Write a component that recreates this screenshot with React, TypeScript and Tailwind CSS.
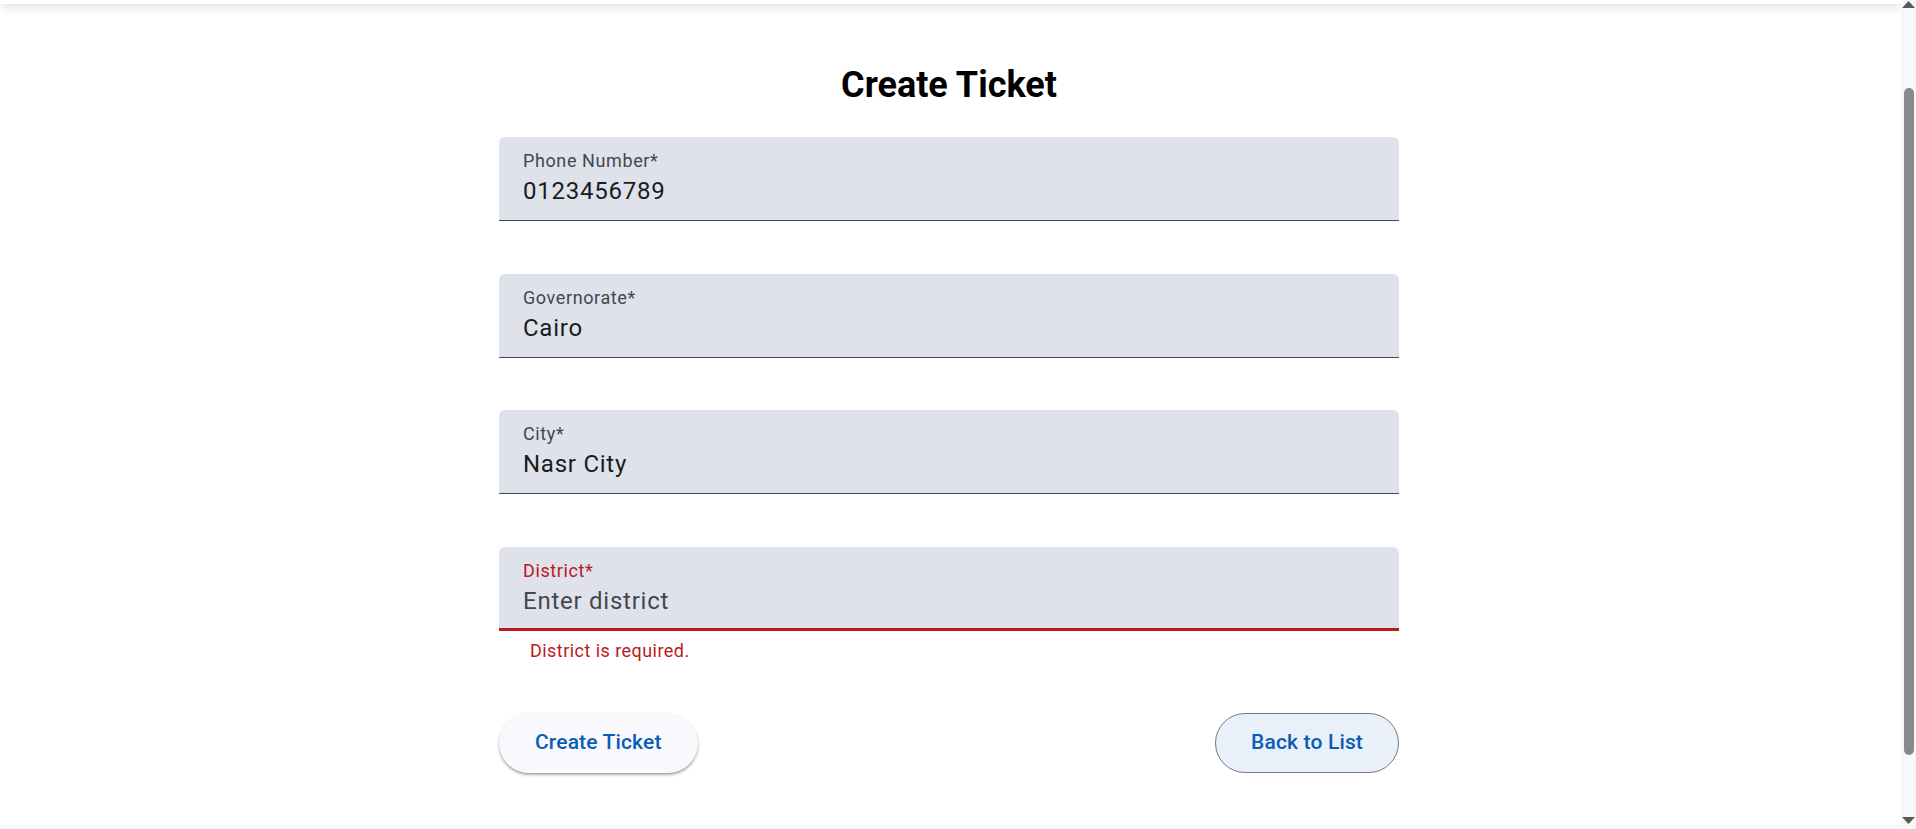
import { useLayoutEffect, useRef } from 'react';

// ── Field ─────────────────────────────────────────────────────────────────

type FieldProps = {
  label: string;
  value?: string;
  placeholder?: string;
  error?: string;
};

function FilledField({ label, value, placeholder, error }: FieldProps) {
  const invalid = Boolean(error);
  return (
    <div className="flex flex-col">
      <label
        className={`
          flex flex-col h-[84px] px-[24px] pt-[12px] rounded-t-[6px] bg-[#dfe2eb]
          ${invalid ? 'border-b-[3px] border-[#ba1a1a]' : 'border-b border-[#44474e]'}
        `}
      >
        <span
          className={`
            text-[18px] leading-[24px] tracking-[0.6px]
            ${invalid ? 'text-[#ba1a1a]' : 'text-[#44474e]'}
          `}
        >
          {label}*
        </span>
        <input
          type="text"
          defaultValue={value}
          placeholder={placeholder}
          className="
            w-full h-[36px] bg-transparent outline-none border-none p-0
            text-[24px] leading-[36px] tracking-[0.75px] text-[#1a1c1e]
            placeholder:text-[#44474e]
          "
        />
      </label>
      {invalid && (
        <p className="pl-[31px] pt-[8px] text-[18px] leading-[24px] tracking-[0.45px] text-[#ba1a1a]">
          {error}
        </p>
      )}
    </div>
  );
}

// ── Scrollbar (classic, drawn beside the scroll area) ─────────────────────

function ScrollRail() {
  return (
    <aside className="w-[15px] shrink-0 bg-[#f8f8f8] flex flex-col items-center">
      <svg className="mt-[1px] shrink-0" width="13" height="7" viewBox="0 0 13 7">
        <path d="M6.5 0L13 7H0Z" fill="#5a5a5a" />
      </svg>
      <div className="mt-[80px] w-[10px] h-[667px] shrink-0 rounded-full bg-[#8a8a8a]" />
      <div className="flex-1" />
      <svg className="mb-[5px] shrink-0" width="13" height="7" viewBox="0 0 13 7">
        <path d="M0 0H13L6.5 7Z" fill="#5a5a5a" />
      </svg>
    </aside>
  );
}

// ── Page ──────────────────────────────────────────────────────────────────

export default function App() {
  const scrollRef = useRef<HTMLDivElement>(null);

  // The reference is captured slightly scrolled past the app bar
  useLayoutEffect(() => {
    if (scrollRef.current) scrollRef.current.scrollTop = 91;
  }, []);

  return (
    <div className="flex h-screen overflow-hidden bg-white font-['Roboto','Liberation_Sans',sans-serif]">
      <div ref={scrollRef} className="flex-1 min-w-0 overflow-y-auto [scrollbar-width:none]">
        <header className="relative z-10 h-[95px] bg-white shadow-[0_3px_10px_rgba(0,0,0,0.13)]" />

        <main className="flex justify-center pr-[3px]">
          <div className="w-[900px] pt-[61px] pb-[54px]">
            <h1 className="text-center text-[36px] leading-[41px] font-bold text-black">
              Create Ticket
            </h1>

            <form className="mt-[31px] flex flex-col gap-[52.5px]" onSubmit={e => e.preventDefault()}>
              <FilledField label="Phone Number" value="0123456789" />
              <FilledField label="Governorate" value="Cairo" />
              <FilledField label="City" value="Nasr City" />
              <FilledField label="District" placeholder="Enter district" error="District is required." />
            </form>

            <div className="mt-[50.5px] flex items-center justify-between">
              <button
                type="button"
                className="
                  h-[60px] px-[36px] rounded-full bg-[#f8f8fd]
                  text-[21px] font-medium tracking-[0.15px] text-[#0a5cb5]
                  shadow-[0_2px_3px_rgba(0,0,0,0.3),0_1px_1px_rgba(0,0,0,0.1)]
                "
              >
                Create Ticket
              </button>
              <button
                type="button"
                className="
                  h-[60px] px-[35px] rounded-full bg-[#e9f0f9] border border-[#74777f]
                  text-[21px] font-medium tracking-[0.15px] text-[#0a5cb5]
                "
              >
                Back to List
              </button>
            </div>
          </div>
        </main>

        <footer className="h-[75px] bg-[#f6f6f6] shadow-[0_-1px_4px_rgba(0,0,0,0.05)]" />
      </div>

      <ScrollRail />
    </div>
  );
}
